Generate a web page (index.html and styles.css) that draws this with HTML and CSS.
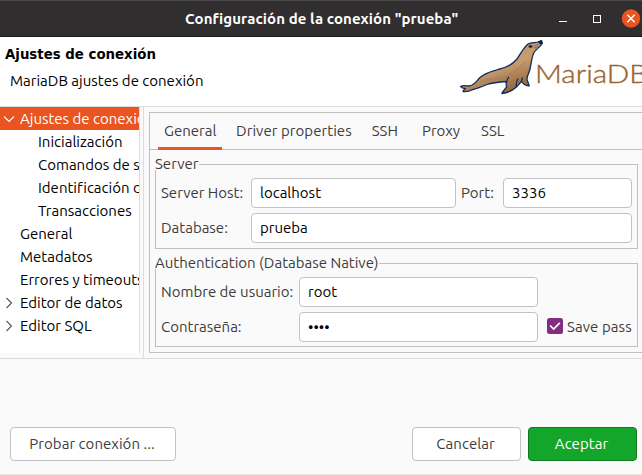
FILE: index.html
```html
<!DOCTYPE html>
<html lang="es">
<head>
<meta charset="utf-8">
<title>Configuración de la conexión "prueba"</title>
<link rel="stylesheet" href="styles.css">
</head>
<body>
<div class="window">
  <header class="titlebar">
    <span class="title">Configuración de la conexión "prueba"</span>
    <svg class="controls" width="84" height="36" viewBox="0 0 84 36">
      <path d="M1 20.500h8" stroke="#fff" fill="none"/>
      <rect x="35.500" y="14.500" width="7" height="7" stroke="#fff" fill="none"/>
      <circle cx="73" cy="17.500" r="9.200" fill="#e95420"/>
      <path d="M69.300 13.800l7.400 7.400M76.700 13.800l-7.400 7.400" stroke="#fff" stroke-width="1.500" fill="none"/>
    </svg>
  </header>
  <section class="banner">
    <div class="banner-text">
      <h1>Ajustes de conexión</h1>
      <p>MariaDB ajustes de conexión</p>
    </div>
    <div class="brand">
      <svg width="88" height="60" viewBox="0 0 88 60">
        <defs>
          <linearGradient id="fur" x1="0" y1="0" x2="0.5" y2="1">
            <stop offset="0" stop-color="#b98a5c"/>
            <stop offset="0.6" stop-color="#c79d70"/>
            <stop offset="1" stop-color="#94653c"/>
          </linearGradient>
        </defs>
        <path d="M1.500 47.500C4 46 7.500 47 10 47C15 46.500 17 43 20 39.500C26 33.500 33 32.500 39 30.500C49 28.500 54 25 58 20C62 14 65 8 69 5C72 3 76 4 79 3L82.500 1.500L83.300 4.500C81 8 77 10.500 75 13.500C72.500 18 72.500 24 71 30C70 34.500 68 37 68 40C68.200 43 70.500 45 70 47C67 46.500 64 45 62.500 42.500C60.500 44.500 59 46.500 57.500 48C54 51 50 54 43 54.500C43.500 52 46 50.500 47.500 48C47.500 46 46.500 44 47.500 42.500C40 43 34 43.500 28 45.500C22 48 18 49.500 14 50.500C11 52 8 53 4 52.500C4 51 6 50.500 6.500 49.500C4.500 49.500 2.500 49 1.500 47.500Z" fill="url(#fur)" stroke="#0d2c60" stroke-width="1.300" stroke-linejoin="round"/>
        <path d="M22 43C31 38 38 42 47 38C54 34 61 30 67 22" fill="none" stroke="#94683f" stroke-width="2" opacity=".2"/>
        <path d="M50 38C48 40 47.500 41 47.500 44M57.500 48C57 45 57.500 42 59 39.500M62.500 42.500L63.500 38.500" fill="none" stroke="#0d2c60" stroke-width="1.300"/>
        <ellipse cx="71.500" cy="7.500" rx="2" ry="1.200" fill="#0b2448"/>
        <path d="M78.500 3L82.500 1.300L83.500 4L81.500 5.500Z" fill="#0b2448"/>
        <path d="M75.500 6.500l4-1M75 8.500l4-.5M76 10l2.500-.5" stroke="#777" stroke-width="1.200"/>
      </svg>
      <svg class="wordmark" width="105" height="34" viewBox="0 0 105 34">
        <text x="-2" y="24" font-size="26" textLength="113" lengthAdjust="spacingAndGlyphs">MariaDB</text>
      </svg>
    </div>
  </section>
  <main class="content">
    <nav class="tree">
      <div class="row selected"><svg class="arrow" width="12" height="12" viewBox="0 0 12 12"><path d="M1 3.500L6 8.500L11 3.500"/></svg>Ajustes de conexión</div>
      <div class="row child">Inicialización</div>
      <div class="row child">Comandos de shell</div>
      <div class="row child">Identificación de cliente</div>
      <div class="row child">Transacciones</div>
      <div class="row">General</div>
      <div class="row">Metadatos</div>
      <div class="row">Errores y timeouts</div>
      <div class="row"><svg class="arrow" width="12" height="12" viewBox="0 0 12 12"><path d="M3.500 1L8.500 6L3.500 11"/></svg>Editor de datos</div>
      <div class="row"><svg class="arrow" width="12" height="12" viewBox="0 0 12 12"><path d="M3.500 1L8.500 6L3.500 11"/></svg>Editor SQL</div>
    </nav>
    <section class="pane">
      <div class="notebook">
        <div class="tabs">
          <span class="tab active">General</span>
          <span class="tab driver">Driver properties</span>
          <span class="tab ssh">SSH</span>
          <span class="tab proxy">Proxy</span>
          <span class="tab">SSL</span>
        </div>
        <fieldset class="server">
          <legend>Server</legend>
          <div class="line">
            <label class="host-label">Server Host:</label>
            <div class="field host">localhost</div>
            <label class="port-label">Port:</label>
            <div class="field port">3336</div>
          </div>
          <div class="line">
            <label class="db-label">Database:</label>
            <div class="field database">prueba</div>
          </div>
        </fieldset>
        <fieldset class="auth">
          <legend>Authentication (Database Native)</legend>
          <div class="line">
            <label class="user-label">Nombre de usuario:</label>
            <div class="field cred">root</div>
          </div>
          <div class="line">
            <label class="pass-label">Contraseña:</label>
            <div class="field cred">••••</div>
            <svg class="check" width="16" height="16" viewBox="0 0 16 16"><rect width="16" height="16" rx="2.500" fill="#852b80"/><path d="M3.200 7.500L6.600 11L12.800 4.800" fill="none" stroke="#fff" stroke-width="1.700"/></svg>
            <span class="save">Save pass</span>
          </div>
        </fieldset>
      </div>
    </section>
  </main>
  <footer class="actions">
    <button class="test">Probar conexión ...</button>
    <button class="cancel">Cancelar</button>
    <button class="accept">Aceptar</button>
  </footer>
</div>
</body>
</html>
```
FILE: styles.css
```css
* { box-sizing: border-box; }
body { margin: 0; overflow: hidden; font-family: Ubuntu, "Noto Sans", sans-serif; font-size: 15px; line-height: 22px; color: #3d3d3d; font-variant-ligatures: none; }
.window { width: 642px; height: 475px; display: flex; flex-direction: column; background: #fafafa; }
.titlebar { height: 37px; flex: none; display: flex; align-items: center; justify-content: space-between; background: #302e2f; border-top: 1px solid #484647; border-bottom: 1px solid #1d1b1c; padding-left: 185px; color: #fff; font-weight: 700; white-space: nowrap; }
.title { letter-spacing: .08px; }
.controls { flex: none; }
.banner { height: 70px; flex: none; display: flex; background: #fff; border-bottom: 1px solid #dcdcdc; color: #000; overflow: hidden; }
.banner-text { width: 459px; flex: none; padding: 7px 0 0 5px; }
h1 { margin: 0; font-family: "DejaVu Sans", sans-serif; font-size: 13.330px; line-height: 22px; }
p { margin: 4px 0 0 5px; }
.brand { display: flex; flex: none; padding-top: 2px; }
.wordmark { flex: none; margin: 20px 0 0 -10px; fill: #9b642f; stroke: #9b642f; stroke-width: .4px; font-family: Lato, sans-serif; font-weight: 300; }
.content { height: 252px; flex: none; display: flex; border-bottom: 1px solid #dcdcdc; }
.tree { width: 140px; height: 246px; flex: none; overflow: hidden; background: #fff; color: #000; border-right: 1px solid #dcdcdc; }
.row { height: 23px; width: 220px; padding-left: 20px; display: flex; align-items: center; white-space: nowrap; }
.row.selected { background: #e95420; color: #fff; }
.row.child { padding-left: 38px; }
.arrow { flex: none; margin: 0 5px 0 -17px; fill: none; stroke: #555; stroke-width: 1.100; }
.selected .arrow { stroke: #fff; }
.pane { flex: 1; margin-left: 3px; border-left: 1px solid #dcdcdc; padding: 5px 0 0 5px; overflow: hidden; }
.notebook { height: 241px; border: 1px solid #bfbfbf; border-right: 0; }
.tabs { height: 37px; display: flex; gap: 20px; padding-left: 8px; border-bottom: 1px solid #bfbfbf; white-space: nowrap; }
.tab { height: 37px; padding: 7px 0 0; line-height: 22px; }
.tab.active { width: 64px; padding-left: 6px; border-bottom: 3px solid #e95420; margin-right: -6px; }
.driver { letter-spacing: .05px; }
.ssh { margin-right: 4px; }
.proxy { margin-right: 1px; }
fieldset { margin: 0 4px 0 5px; min-width: 0; padding: 8px 5px 0; border: 1px solid #bfbfbf; }
.server { height: 91px; margin-top: 8px; }
.auth { height: 90px; margin-top: 8px; }
legend { padding: 0 1px 0 0; margin-left: -6px; height: 12px; line-height: 12px; background: #fafafa; }
.line { display: flex; align-items: center; height: 30px; margin-bottom: 5px; white-space: nowrap; }
.field { height: 30px; flex: none; padding: 3px 8px; border: 1px solid #c2c2c2; border-radius: 4px; background: #fff; color: #000; }
label { flex: none; }
.host-label, .db-label { width: 90px; }
.host { width: 205px; }
.port-label { width: 42px; margin-left: 5px; }
.port { width: 129px; }
.database { width: 381px; }
.user-label, .pass-label { width: 138px; }
.cred { width: 239px; }
.check { margin: 0 4px 0 9px; flex: none; position: relative; top: -1px; }
.save { letter-spacing: .08px; }
.actions { flex: 1; display: flex; padding: 68px 5px 0 10px; border-bottom: 1px solid #e8e8e8; }
button { height: 34px; padding: 0 2px 0 0; font: inherit; letter-spacing: .04px; color: #3d3d3d; background: #fff; border: 1px solid #c2c2c2; border-radius: 4px; }
.test { width: 166px; margin-right: auto; }
.cancel { width: 109px; margin-right: 7px; }
.accept { width: 109px; background: #14a52b; border-color: #0d7a1e; color: #fff; }
```
